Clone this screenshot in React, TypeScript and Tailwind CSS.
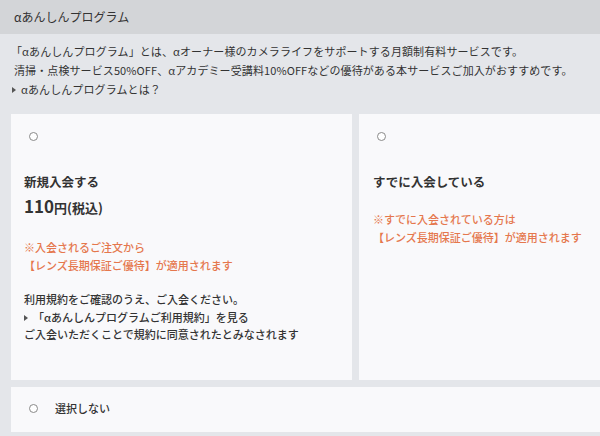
const orange = 'text-[#e5774d]'

function Radio() {
  return <span className="block w-[9px] h-[9px] rounded-full border border-[#8a8a8a] bg-white shrink-0" />
}

function Arrow() {
  return (
    <span className="inline-block w-0 h-0 align-middle border-l-[4px] border-l-[#555] border-y-[3px] border-y-transparent mr-[5px] -mt-[2px]" />
  )
}

export default function App() {
  return (
    <div className="w-[600px] h-[436px] overflow-hidden bg-[#e4e6ea] text-[#333] font-['Noto_Sans_CJK_JP',sans-serif]">
      <div className="h-[34px] flex items-center px-[14px] bg-[#d3d5d8] text-[12px]">αあんしんプログラム</div>

      <div className="pt-[8px] pl-[14px] text-[11px] leading-[19px] tracking-[0.1px]">
        <p className="-ml-[3px]">「αあんしんプログラム」とは、αオーナー様のカメラライフをサポートする月額制有料サービスです。</p>
        <p>清掃・点検サービス50%OFF、αアカデミー受講料10%OFFなどの優待がある本サービスご加入がおすすめです。</p>
        <p className="-ml-[2px]">
          <Arrow />
          αあんしんプログラムとは？
        </p>
      </div>

      <div className="flex gap-[7px] pl-[11px] mt-[15px]">
        <div className="w-[341px] h-[266px] bg-[#f9f9fb] pt-[18px] pl-[13px] shrink-0">
          <div className="pl-[5px]">
            <Radio />
          </div>
          <div className="mt-[32px] text-[12.5px] leading-[18px] font-bold">新規入会する</div>
          <div className="mt-[4px] leading-[22px] font-bold">
            <span className="text-[17px]">110</span>
            <span className="text-[13px]">円(税込)</span>
          </div>
          <div className={`mt-[20px] text-[11px] leading-[17.5px] font-medium ${orange}`}>
            <p>※入会されるご注文から</p>
            <p>【レンズ長期保証ご優待】が適用されます</p>
          </div>
          <div className="mt-[17px] text-[11px] leading-[17.5px] font-medium">
            <p>利用規約をご確認のうえ、ご入会ください。</p>
            <p>
              <Arrow />
              「αあんしんプログラムご利用規約」を見る
            </p>
            <p>ご入会いただくことで規約に同意されたとみなされます</p>
          </div>
        </div>

        <div className="flex-1 h-[266px] bg-[#f9f9fb] pt-[18px] pl-[14px]">
          <div className="pl-[4px]">
            <Radio />
          </div>
          <div className="mt-[32px] text-[12.5px] leading-[18px] font-bold">すでに入会している</div>
          <div className={`mt-[20px] text-[11px] leading-[17.5px] font-medium ${orange}`}>
            <p>※すでに入会されている方は</p>
            <p>【レンズ長期保証ご優待】が適用されます</p>
          </div>
        </div>
      </div>

      <div className="mt-[7px] ml-[11px] h-[45px] bg-[#f9f9fb] flex items-center pl-[18px] pb-[2px] gap-[17px]">
        <Radio />
        <span className="text-[11px] font-medium">選択しない</span>
      </div>
    </div>
  )
}
